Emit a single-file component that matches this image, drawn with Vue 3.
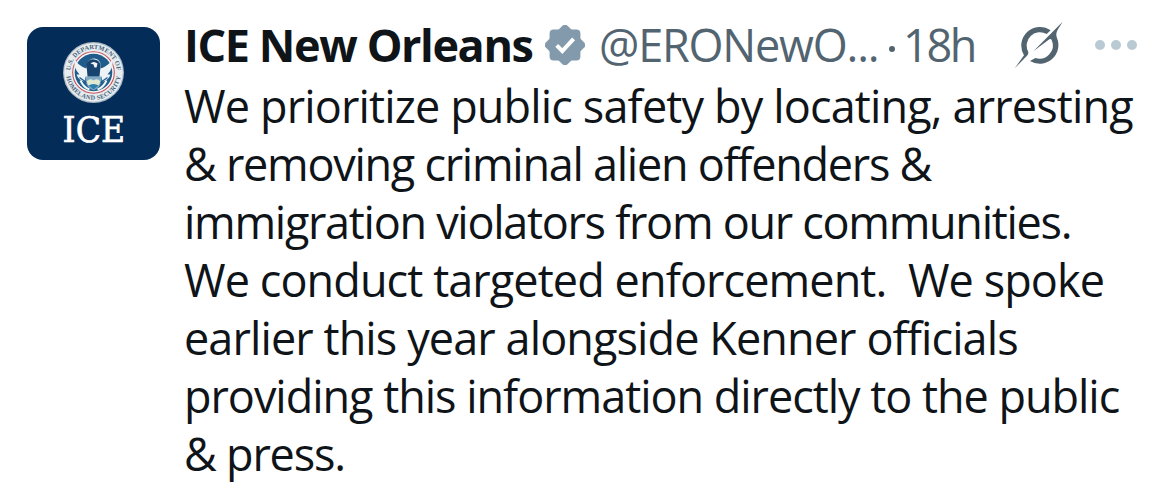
<template>
  <article class="post">
    <svg class="avatar" viewBox="0 0 133 133">
      <defs>
        <path id="seal-top" d="M-23.2 2 A23.3 23.3 0 1 1 23.2 2" />
        <path id="seal-bottom" d="M-27.4 0 A27.4 27.4 0 0 0 27.4 0" />
      </defs>
      <rect width="133" height="133" rx="16" fill="#032c58" />
      <g transform="translate(66.5 45.5)">
        <circle r="30.5" fill="#a9b8c4" />
        <circle r="29.3" fill="#e6ecef" />
        <circle r="20.8" fill="#f6f8f8" stroke="#c4545c" stroke-width="1.1" />
        <circle r="18.8" fill="#1f5c8c" />
        <!-- shield -->
        <path d="M-8 1 H8 V8 Q7 15 0 18 Q-7 15 -8 8 Z" fill="#7fa9c4" />
        <path d="M-7 9 Q-3 5 0 8 Q4 5 7 9 L5 13 Q0 11 -5 13 Z" fill="#dfe9cf" />
        <path d="M-5 13 Q0 10 5 13 L0 17 Z" fill="#2f7fae" />
        <!-- eagle -->
        <path
          d="M-19 -13 Q-14 -6 -7 -4 L-6 -9 Q-5 -14 1 -14 Q7 -13 7 -7 L7 -4 Q14 -6 19 -13 Q20 -4 14 2 L17 2 Q15 8 9 9 L8 4 L-8 4 L-9 9 Q-15 8 -17 2 L-14 2 Q-20 -4 -19 -13 Z"
          fill="#eef3f5"
        />
        <path d="M-7 -8 Q-5 -14 1 -13 Q7 -12 7 -6 L6 4 H-6 Z" fill="#17456f" />
        <path d="M-3 -9 Q0 -12 4 -9 L3 -5 L1 -5 L0 -8 Z" fill="#f4f6f6" />
        <path d="M-14 5 L-7 10 M14 5 L7 10" stroke="#1f5c8c" stroke-width="1.3" />
        <path d="M-13 8 Q-10 15 -4 17 M13 8 Q10 15 4 17" stroke="#eef3f5" stroke-width="2" fill="none" />
        <text class="seal-text">
          <textPath href="#seal-top" startOffset="50%" text-anchor="middle" textLength="69">U.S. DEPARTMENT OF</textPath>
        </text>
        <text class="seal-text">
          <textPath href="#seal-bottom" startOffset="50%" text-anchor="middle" textLength="78">HOMELAND SECURITY</textPath>
        </text>
      </g>
      <text class="agency" x="35.6" y="115.2" textLength="62.5" lengthAdjust="spacingAndGlyphs">ICE</text>
    </svg>

    <div class="body">
      <header class="head">
        <span class="name">ICE New Orleans</span>
        <svg class="badge" viewBox="-20 -20 40 40">
          <g fill="#829aab">
            <rect x="-15.4" y="-15.4" width="30.8" height="30.8" rx="4" />
            <rect x="-15.4" y="-15.4" width="30.8" height="30.8" rx="4" transform="rotate(45)" />
          </g>
          <path d="M-8.3 0.4 L-2.7 6 L8.6 -6.2" fill="none" stroke="#fff" stroke-width="4" />
        </svg>
        <span class="handle">@ERONewO...</span>
        <span class="separator"></span>
        <span class="time">18h</span>
        <div class="actions">
          <svg class="grok" viewBox="0 0 180 168" fill="#536471">
            <path d="M20 154 L48 115 A56 56 0 0 1 128 40 L116 51 A40 40 0 0 0 60 103 Q63 110 57 116 Z" />
            <path d="M164 14 L76 103 L122 68 Q128 64 131 69 A40 40 0 0 1 82 123 L66 132 A56 56 0 0 0 147 63 Q142 51 149 38 Z" />
          </svg>
          <div class="more"><i></i><i></i><i></i></div>
        </div>
      </header>
      <p class="text">
        <span
          v-for="line in lines"
          :key="line.text"
          class="line"
          :style="{ letterSpacing: `${line.tracking}px` }"
        >{{ line.text }}</span>
      </p>
    </div>
  </article>
</template>

<script setup>
// tracking keeps each line at its set width
const lines = [
  { text: "We prioritize public safety by locating, arresting", tracking: -0.85 },
  { text: "& removing criminal alien offenders &", tracking: -1.27 },
  { text: "immigration violators from our communities.", tracking: -1.29 },
  { text: "We conduct targeted enforcement.  We spoke", tracking: -0.91 },
  { text: "earlier this year alongside Kenner officials", tracking: -0.9 },
  { text: "providing this information directly to the public", tracking: -1.03 },
  { text: "& press.", tracking: -1.2 },
];
</script>

<style>
body {
  background: #fff;
}
</style>

<style scoped>
.post {
  display: flex;
  box-sizing: border-box;
  height: 497px;
  padding: 25px 33px 0 27px;
  gap: 24px;
  overflow: hidden;
  font-family: "Open Sans", sans-serif;
  font-size: 45px;
  color: #0f1419;
}

.avatar {
  flex: none;
  width: 133px;
  height: 133px;
  margin-top: 2px;
}

.seal-text {
  font-family: "Liberation Serif", serif;
  font-size: 6.4px;
  font-weight: 700;
  fill: #48627a;
}

.agency {
  font-family: "DejaVu Serif", serif;
  font-size: 36px;
  fill: #fff;
  stroke: #fff;
  stroke-width: 0.7px;
}

.body {
  flex: 1;
  min-width: 0;
  white-space: pre;
}

.head {
  display: flex;
  align-items: center;
  height: 40px;
  line-height: 42px;
}

.name {
  width: 361px;
  font-weight: 700;
  letter-spacing: -1.4px;
}

.badge {
  flex: none;
  width: 40px;
  height: 40px;
}

.handle,
.time {
  color: #536471;
}

.handle {
  width: 290px;
  margin-left: 14px;
  letter-spacing: -1.2px;
}

.separator {
  width: 6px;
  height: 6px;
  margin: 7px 8px 0 0;
  border-radius: 50%;
  background: #536471;
}

.time {
  letter-spacing: -2.3px;
}

.actions {
  display: flex;
  align-items: center;
  gap: 27px;
  margin-left: auto;
}

.grok {
  width: 60px;
  height: 56px;
}

.more {
  display: flex;
  gap: 6px;
}

.more i {
  width: 10px;
  height: 10px;
  border-radius: 50%;
  background: #b9cad3;
}

.text {
  display: flex;
  flex-direction: column;
  align-items: flex-start;
  margin: 12px 0 0;
  line-height: 58px;
}
</style>
